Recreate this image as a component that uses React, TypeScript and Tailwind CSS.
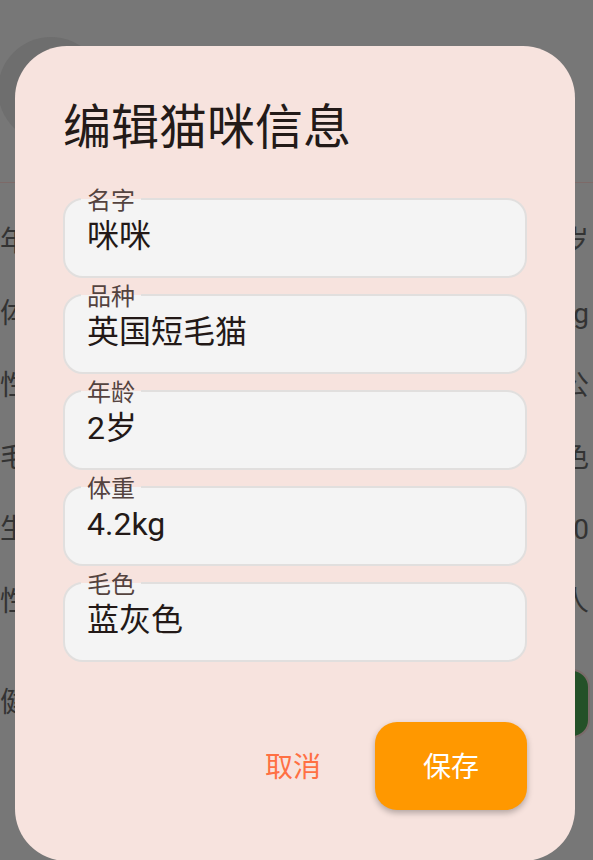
import React from "react";

const fields = [
  { label: "名字", value: "咪咪" },
  { label: "品种", value: "英国短毛猫" },
  { label: "年龄", value: "2岁" },
  { label: "体重", value: "4.2kg" },
  { label: "毛色", value: "蓝灰色" },
];

const rows = [
  { l: "年龄", r: "2岁" },
  { l: "体重", r: "4.2kg" },
  { l: "性别", r: "公" },
  { l: "毛色", r: "蓝灰色" },
  { l: "生日", r: "2022-03-10" },
  { l: "性格", r: "温顺粘人" },
];

export default function App() {
  return (
    <div
      className="relative w-[593px] h-[860px] overflow-hidden bg-[#777777]"
      style={{ fontFamily: "Roboto, 'Noto Sans CJK SC', sans-serif" }}
    >
      {/* underlying page (dimmed by scrim) */}
      <div className="flex flex-col">
        <div className="h-[182px] pt-[37px]">
          <div className="ml-[-2px] w-[106px] h-[106px] rounded-full bg-[#6e6e6e]" />
        </div>
        <div className="h-[1px] bg-[#7d6a68]" />
        <div className="flex flex-col pt-[23px]">
          {rows.map((r) => (
            <div
              key={r.l}
              className="h-[72px] flex items-center justify-between pr-[4px] text-[28px] text-[#333333]"
            >
              <span>{r.l}</span>
              <span>{r.r}</span>
            </div>
          ))}
          <div className="h-[130px] flex items-center justify-between text-[28px] text-[#333333]">
            <span>健康记录</span>
            <div className="w-[120px] h-[69px] rounded-l-[34px] rounded-r-[18px] bg-[#245128] border-2 border-[#7a6b6a] mr-[3px]" />
          </div>
        </div>
      </div>

      {/* dialog */}
      <div className="absolute left-[15px] top-[46px] w-[560px] h-[815px] rounded-[52px] bg-[#f7e3de] px-[48px] pt-[50px] flex flex-col">
        <h1 className="text-[48px] leading-[64px] text-[#231a18] font-normal">编辑猫咪信息</h1>
        <div className="mt-[38px] flex flex-col gap-[16px]">
          {fields.map((f) => (
            <div
              key={f.label}
              className="relative h-[80px] rounded-[20px] border-2 border-[#e1dfde] bg-[#f4f4f4] pl-[22px] pt-[16px]"
            >
              <span className="absolute left-[16px] top-[-13px] px-[6px] text-[24px] leading-[28px] text-[#54433f] bg-[linear-gradient(to_bottom,#f7e3de_12px,#f4f4f4_12px)]">
                {f.label}
              </span>
              <div className="text-[32px] leading-[40px] text-[#231917]">{f.value}</div>
            </div>
          ))}
        </div>
        <div className="mt-[60px] flex justify-end items-center">
          <button className="h-[88px] pt-[4px] px-[26px] mr-[28px] text-[28px] text-[#ff7043] font-normal">
            取消
          </button>
          <button className="w-[152px] h-[88px] pt-[4px] rounded-[22px] bg-[#ff9800] text-white text-[28px] font-normal shadow-[0_3px_6px_rgba(0,0,0,0.28)]">
            保存
          </button>
        </div>
      </div>
    </div>
  );
}
